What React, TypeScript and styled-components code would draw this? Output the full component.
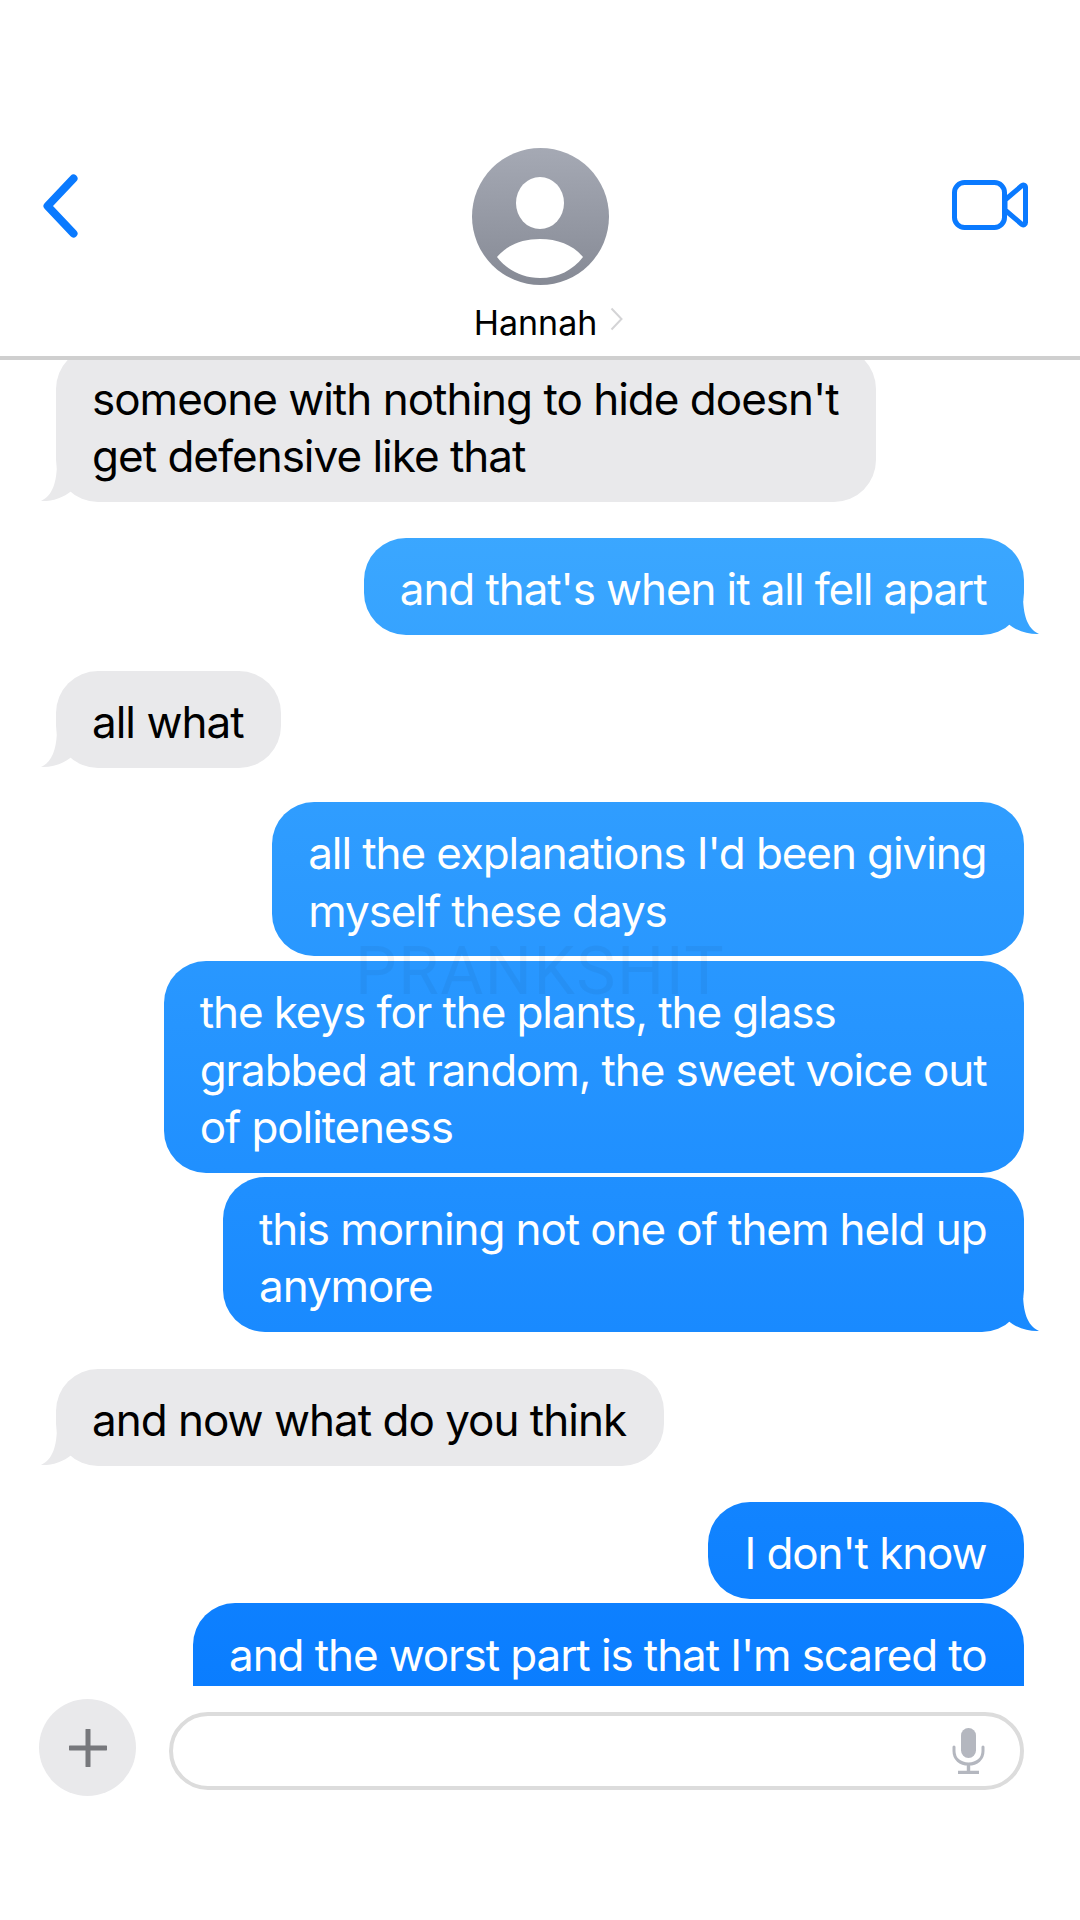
import React from 'react';
import styled, { createGlobalStyle } from 'styled-components';

interface Message {
  id: number;
  text: string;
  mine: boolean;
  tail?: boolean;
  gap: number;
}

const messages: Message[] = [
  { id: 1, text: "someone with nothing to hide doesn't\nget defensive like that", mine: false, tail: true, gap: -13 },
  { id: 2, text: "and that's when it all fell apart", mine: true, tail: true, gap: 36 },
  { id: 3, text: 'all what', mine: false, tail: true, gap: 36 },
  { id: 4, text: "all the explanations I'd been giving\nmyself these days", mine: true, gap: 34 },
  { id: 5, text: 'the keys for the plants, the glass\ngrabbed at random, the sweet voice out\nof politeness', mine: true, gap: 4.5 },
  { id: 6, text: 'this morning not one of them held up\nanymore', mine: true, tail: true, gap: 4.5 },
  { id: 7, text: 'and now what do you think', mine: false, tail: true, gap: 37 },
  { id: 8, text: "I don't know", mine: true, gap: 36 },
  { id: 9, text: "and the worst part is that I'm scared to\nask", mine: true, gap: 4.5 },
];

const GlobalStyle = createGlobalStyle`
  html, body {
    margin: 0;
    padding: 0;
    background: #fff;
  }
`;

const Screen = styled.div`
  position: relative;
  width: 1080px;
  height: 1920px;
  overflow: hidden;
  background: #fff;
  font-family: Inter, 'Liberation Sans', sans-serif;
  display: flex;
  flex-direction: column;
`;

const Header = styled.header`
  height: 208px;
  padding: 148px 43px 0;
  border-bottom: 4px solid #cfcfcf;
  display: grid;
  grid-template-columns: 1fr auto 1fr;
  align-items: start;
`;

const BackButton = styled.svg`
  margin-top: 26px;
  width: 35px;
  height: 64px;
`;

const VideoButton = styled.svg`
  justify-self: end;
  margin: 32px 9px 0 0;
  width: 76px;
  height: 50px;
`;

const Contact = styled.div`
  display: flex;
  flex-direction: column;
  align-items: center;
`;

const Avatar = styled.svg`
  width: 137px;
  height: 137px;
`;

const NameRow = styled.div`
  position: relative;
  margin: 18px 9px 0 0;
  font-size: 34px;
  line-height: 40px;
  color: #000;
`;

const Chevron = styled.svg`
  position: absolute;
  left: calc(100% + 13px);
  top: 4px;
  width: 13px;
  height: 24px;
`;

const Thread = styled.main`
  height: 1326px;
  overflow: hidden;
  padding: 0 56px;
  display: flex;
  flex-direction: column;
`;

const TAIL_RIGHT = "path('M30 0C30 20 34 34 46 39.5C36 40 24 37 15 29L5 20Z')";
const TAIL_LEFT = "path('M16 0C16 20 12 34 0 39.5C10 40 22 37 31 29L41 20Z')";

const Bubble = styled.div<{ $mine: boolean; $tail?: boolean; $gap: number }>`
  position: relative;
  flex: none;
  align-self: ${(p) => (p.$mine ? 'flex-end' : 'flex-start')};
  padding: 23.5px 37.5px 16px 36px;
  border-radius: 42px;
  font-size: 44px;
  line-height: 57.5px;
  letter-spacing: ${(p) => (p.$mine ? '-1.1px' : '-1px')};
  white-space: pre;
  color: ${(p) => (p.$mine ? '#fff' : '#000')};
  background: ${(p) =>
    p.$mine ? 'linear-gradient(180deg, #42adff 360px, #0a7dff 1690px) fixed' : '#e9e9eb'};
  margin-top: ${(p) => p.$gap}px;

  ${(p) =>
    p.$tail &&
    `
    &::after {
      content: '';
      position: absolute;
      bottom: 0;
      width: 46px;
      height: 40px;
      background: inherit;
      ${p.$mine ? 'right: -15px;' : 'left: -15px;'}
      clip-path: ${p.$mine ? TAIL_RIGHT : TAIL_LEFT};
    }
  `}
`;

const Composer = styled.footer`
  margin-top: 13px;
  padding: 0 56px 0 39px;
  display: flex;
  align-items: flex-start;
  gap: 33px;
`;

const PlusButton = styled.div`
  flex: none;
  width: 97px;
  height: 97px;
  border-radius: 50%;
  background: #e9e9eb;
  display: flex;
  align-items: center;
  justify-content: center;
`;

const InputField = styled.div`
  flex: 1;
  box-sizing: border-box;
  height: 78px;
  margin-top: 13px;
  border: 4px solid #dcdcdc;
  border-radius: 39px;
  padding-right: 35px;
  display: flex;
  align-items: center;
  justify-content: flex-end;
`;

const Watermark = styled.div`
  position: absolute;
  left: 355px;
  top: 934px;
  font-family: Roboto, 'Liberation Sans', sans-serif;
  font-size: 66px;
  line-height: 76px;
  letter-spacing: 1.5px;
  color: rgba(0, 0, 0, 0.045);
  pointer-events: none;
`;

const App: React.FC = () => (
  <Screen>
    <GlobalStyle />
    <Header>
      <BackButton viewBox="0 0 35 64" fill="none">
        <path d="M30.5 4.5 4.5 32 30.5 59.5" stroke="#0a7aff" strokeWidth="8" strokeLinecap="round" strokeLinejoin="round" />
      </BackButton>
      <Contact>
        <Avatar viewBox="0 0 137 137">
          <defs>
            <linearGradient id="avatarFill" x1="0" y1="0" x2="0" y2="1">
              <stop offset="0" stopColor="#a5a9b4" />
              <stop offset="1" stopColor="#868a95" />
            </linearGradient>
          </defs>
          <circle cx="68.5" cy="68.5" r="68.5" fill="url(#avatarFill)" />
          <ellipse cx="68" cy="55" rx="24" ry="26" fill="#fff" />
          <path d="M25 109C35 97 50 91 68 91S101 97 111 109C101 122 86 130 68 130S35 122 25 109Z" fill="#fff" />
        </Avatar>
        <NameRow>
          Hannah
          <Chevron viewBox="0 0 13 24" fill="none">
            <path d="M1.5 1.5 11.5 12 1.5 22.5" stroke="#d4d4d6" strokeWidth="2" />
          </Chevron>
        </NameRow>
      </Contact>
      <VideoButton viewBox="0 0 76 50" fill="none">
        <rect x="2.5" y="2.5" width="50" height="45" rx="10" stroke="#0a7aff" strokeWidth="5" />
        <path d="M53 20 70 5.5C71.5 4.5 73.5 5 73.5 7.5V42.5C73.5 45 71.5 45.5 70 44.5L53 30Z" stroke="#0a7aff" strokeWidth="5" strokeLinejoin="round" />
      </VideoButton>
    </Header>
    <Thread>
      {messages.map((m) => (
        <Bubble key={m.id} $mine={m.mine} $tail={m.tail} $gap={m.gap}>
          {m.text}
        </Bubble>
      ))}
    </Thread>
    <Composer>
      <PlusButton>
        <svg width="38" height="38" viewBox="0 0 38 38" fill="none">
          <path d="M19 1V37M1 19H37" stroke="#77787c" strokeWidth="5" strokeLinecap="round" />
        </svg>
      </PlusButton>
      <InputField>
        <svg width="33" height="46" viewBox="0 0 33 46" fill="none">
          <rect x="9" y="0" width="15" height="30" rx="7.5" fill="#b4b7bf" />
          <path d="M2 19V23C2 31 8 36 16.5 36S31 31 31 23V19" stroke="#b4b7bf" strokeWidth="3" strokeLinecap="round" />
          <path d="M16.5 36V44M6 44.5H27" stroke="#b4b7bf" strokeWidth="3.4" />
        </svg>
      </InputField>
    </Composer>
    <Watermark>PRANKSHIT</Watermark>
  </Screen>
);

export default App;
